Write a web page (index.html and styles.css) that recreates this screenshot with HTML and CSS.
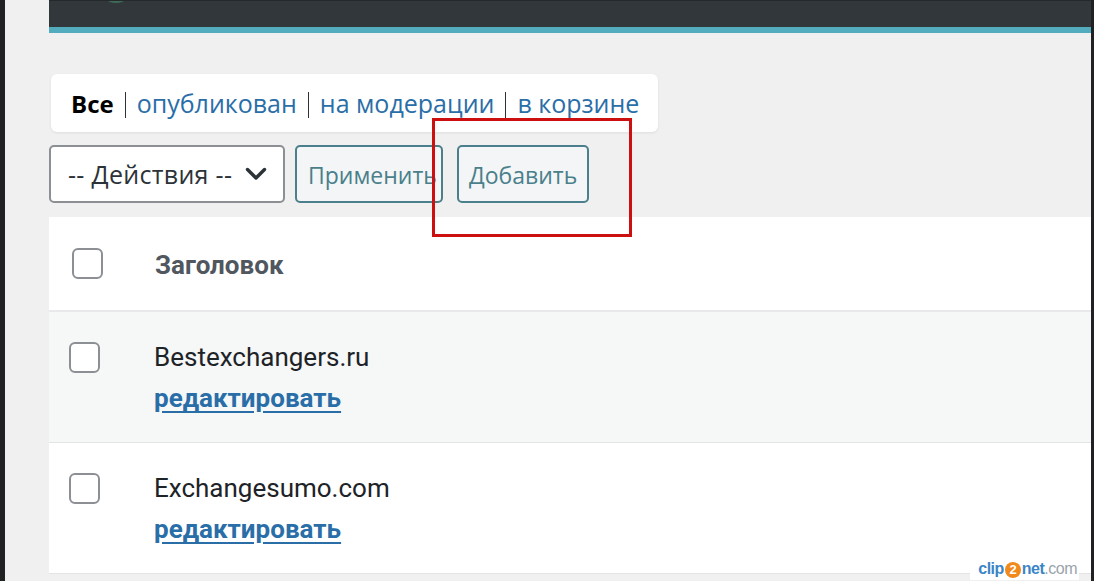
FILE: index.html
```html
<!DOCTYPE html>
<html lang="ru">
<head>
<meta charset="utf-8">
<title>Записи</title>
<link rel="stylesheet" href="styles.css">
</head>
<body>
<div class="frame">
  <div class="edge-left"></div>
  <div class="gutter"></div>
  <div class="main">
    <div class="topbar"><span class="logo-arc"></span></div>
    <div class="content">
      <div class="status">
        <span class="current">Все</span>
        <span class="sep"></span>
        <a href="#">опубликован</a>
        <span class="sep"></span>
        <a href="#">на модерации</a>
        <span class="sep"></span>
        <a href="#">в корзине</a>
      </div>
      <div class="actions">
        <div class="select">
          <span>-- Действия --</span>
          <svg class="chev" width="22" height="14" viewBox="0 0 22 14"><path d="M2.5 2.5 L11 11 L19.5 2.5" fill="none" stroke="#2c3338" stroke-width="3.4" stroke-linecap="round" stroke-linejoin="round"/></svg>
        </div>
        <button class="btn btn-apply">Применить</button>
        <button class="btn btn-add">Добавить</button>
        <div class="highlight"></div>
      </div>
      <div class="table">
        <div class="row head">
          <span class="check check-head"></span>
          <span class="col-title">Заголовок</span>
        </div>
        <div class="row alt">
          <span class="check"></span>
          <div class="cell">
            <div class="name">Bestexchangers.ru</div>
            <a class="edit" href="#">редактировать</a>
          </div>
        </div>
        <div class="row">
          <span class="check"></span>
          <div class="cell">
            <div class="name">Exchangesumo.com</div>
            <a class="edit" href="#">редактировать</a>
          </div>
        </div>
      </div>
    </div>
    <div class="watermark"><span class="wm-blue">clip</span><span class="wm-two">2</span><span class="wm-blue">net</span><span class="wm-gray">.com</span></div>
  </div>
  <div class="edge-right"></div>
</div>
</body>
</html>
```

FILE: styles.css
```css
html, body {
  margin: 0;
  padding: 0;
  height: 100%;
  overflow: hidden;
}
body {
  background: #f0f0f1;
  font-family: "Open Sans", "Noto Sans", sans-serif;
}
.frame {
  display: flex;
  height: 581px;
}
.edge-left {
  width: 5px;
  background: #1f2123;
  flex: none;
}
.gutter {
  width: 44px;
  background: #f0f0f0;
  flex: none;
}
.edge-right {
  width: 3px;
  background: #1f2123;
  flex: none;
}
.main {
  flex: 1;
  position: relative;
  display: flex;
  flex-direction: column;
  background: #f0f0f1;
}
.topbar {
  height: 26px;
  background: #32373c;
  border-top: 1px solid #26292c;
  border-bottom: 6px solid #52acbd;
  position: relative;
  overflow: hidden;
}
.logo-arc {
  position: absolute;
  left: 50px;
  top: -32px;
  width: 34px;
  height: 34px;
  border-radius: 50%;
  background: #3f6a55;
}
.content {
  padding-top: 41px;
}
.status {
  margin-left: 2px;
  width: 567px;
  height: 58px;
  padding: 0 20px;
  box-sizing: content-box;
  background: #fff;
  border-radius: 6px;
  box-shadow: 0 1px 3px rgba(0,0,0,0.08);
  display: flex;
  align-items: center;
  gap: 0;
  font-size: 25px;
  color: #2271b1;
  white-space: nowrap;
}
.status a {
  color: #2a6ea8;
  text-decoration: none;
}
.status .current {
  color: #000;
  font-weight: 700;
  font-size: 24px;
}
.status .sep {
  flex: none;
  width: 1px;
  height: 26px;
  margin: 4px 11px 0;
  background: #2c3338;
}
.actions {
  margin-top: 13px;
  display: flex;
  align-items: center;
  position: relative;
  height: 58px;
}
.select {
  width: 236px;
  height: 58px;
  box-sizing: border-box;
  border: 2px solid #8c8f94;
  border-radius: 5px;
  background: #fff;
  display: flex;
  align-items: center;
  justify-content: space-between;
  padding: 0 16px 0 17px;
  font-size: 25px;
  letter-spacing: 0.3px;
  color: #2c3338;
  white-space: nowrap;
}
.chev {
  flex: none;
}
.btn {
  height: 58px;
  box-sizing: border-box;
  border: 2px solid #4a7f8b;
  border-radius: 5px;
  background: #f3f5f6;
  color: #4a7f8b;
  font-family: inherit;
  font-size: 23px;
  padding: 2px 10px 0;
  white-space: nowrap;
  overflow: hidden;
}
.btn-apply {
  margin-left: 10px;
  width: 148px;
  text-align: left;
  padding-left: 11px;
}
.btn-add {
  margin-left: 14px;
  width: 132px;
}
.highlight {
  position: absolute;
  left: 383px;
  top: -27px;
  width: 200px;
  height: 119px;
  box-sizing: border-box;
  border: 3px solid #cc1010;
  z-index: 5;
  pointer-events: none;
}
.table {
  margin-top: 14px;
  background: #fff;
  font-family: Roboto, "Noto Sans", sans-serif;
}
.row {
  display: flex;
  align-items: flex-start;
  border-bottom: 1px solid #e4e4e6;
  height: 131px;
  box-sizing: border-box;
  padding-top: 29px;
}
.row.head {
  height: 95px;
  align-items: center;
  padding-top: 0;
  border-bottom: 2px solid #e9e9eb;
}
.row.alt {
  background: #f6f7f7;
}
.check {
  flex: none;
  width: 31px;
  height: 31px;
  box-sizing: border-box;
  border: 2px solid #8c8f94;
  border-radius: 6px;
  background: #fff;
  margin-left: 20px;
  margin-top: 1px;
}
.check-head {
  margin-left: 23px;
  margin-top: 0;
}
.col-title {
  margin-left: 52px;
  font-size: 26px;
  font-weight: 700;
  color: #50575e;
  padding-top: 2px;
}
.cell {
  margin-left: 54px;
}
.name {
  font-size: 26px;
  color: #1d2327;
  line-height: 32px;
}
.edit {
  display: inline-block;
  margin-top: 9px;
  font-size: 26px;
  font-weight: 700;
  color: #2a6ea8;
  text-decoration: underline;
  text-underline-offset: 4px;
  line-height: 32px;
}
.watermark {
  position: absolute;
  right: 12px;
  bottom: 1px;
  padding: 0 2px 0 8px;
  background: #fff;
  font-family: "Liberation Sans", Arial, sans-serif;
  font-size: 16px;
  font-weight: 700;
  letter-spacing: -0.5px;
  line-height: 22px;
}
.wm-blue {
  color: #3b85c6;
}
.wm-two {
  display: inline-block;
  width: 16px;
  height: 16px;
  border-radius: 50%;
  background: #f08a1c;
  color: #fff;
  text-align: center;
  line-height: 16px;
  font-size: 13px;
  margin: 0 1px;
}
.wm-gray {
  color: #9aa3ab;
  font-weight: 400;
}
```
